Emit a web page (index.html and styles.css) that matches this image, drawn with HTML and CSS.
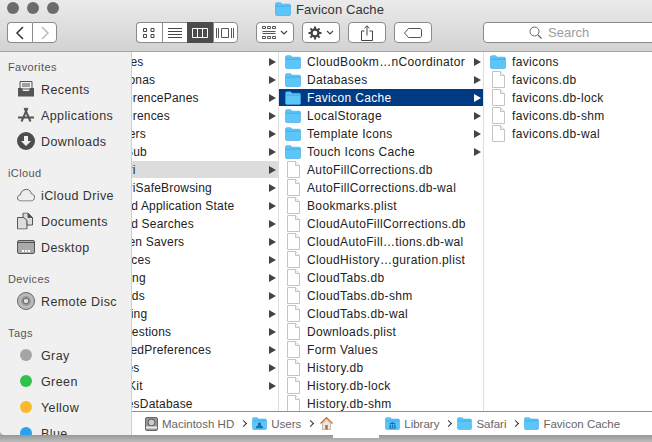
FILE: index.html
```html
<!DOCTYPE html>
<html lang="en">
<head>
    <meta charset="UTF-8">
    <meta name="viewport" content="width=device-width, initial-scale=1.0">
    <title>Favicon Cache</title>
    <link rel="stylesheet" href="styles.css">
</head>
<body>
    <svg class="defs" width="0" height="0">
        <symbol id="folder" viewBox="0 0 16 14">
            <path d="M0.5 2.2C0.5 1.2 1 0.7 2 0.7H5.6L7.2 2.2H14.2C15 2.2 15.5 2.7 15.5 3.5V12.2C15.5 13 15 13.5 14.2 13.5H1.8C1 13.5 0.5 13 0.5 12.2Z" fill="#5cc6f8" stroke="#3aa6e6" stroke-width="0.6"/>
            <path d="M0.8 4.2H15.2" stroke="#35a3e4" stroke-width="0.7"/>
        </symbol>
        <symbol id="folder-users" viewBox="0 0 16 14">
            <use href="#folder"/>
            <path d="M4 12C4 9.8 6 9.6 6.6 9C6 8 6 6 8 6C10 6 10 8 9.4 9C10 9.6 12 9.8 12 12Z" fill="#1470b0"/>
        </symbol>
        <symbol id="folder-library" viewBox="0 0 16 14">
            <use href="#folder"/>
            <path d="M4 7.5L8 5.5L12 7.5ZM4.8 8.2H6.2V11H4.8ZM7.3 8.2H8.7V11H7.3ZM9.8 8.2H11.2V11H9.8ZM4 11.3H12V12.3H4Z" fill="#1470b0"/>
        </symbol>
        <symbol id="file" viewBox="0 0 13 17">
            <path d="M0.5 0.5H8.5L12.5 4.5V16.5H0.5Z" fill="#fff" stroke="#c4c4c4"/>
            <path d="M8.5 0.5V4.5H12.5" fill="#f2f2f2" stroke="#c4c4c4"/>
        </symbol>
    </svg>

    <div class="window">
        <header class="toolbar">
            <div class="lights"><i></i><i></i><i></i></div>
            <div class="title">
                <svg class="title-icon"><use href="#folder"/></svg>
                <span>Favicon Cache</span>
            </div>
            <div class="tools">
                <div class="seg nav">
                    <button><svg width="10" height="14" viewBox="0 0 10 14"><path d="M8 1L2 7L8 13" fill="none" stroke="#333" stroke-width="1.5"/></svg></button>
                    <button><svg width="10" height="14" viewBox="0 0 10 14"><path d="M2 1L8 7L2 13" fill="none" stroke="#bbb" stroke-width="1.5"/></svg></button>
                </div>
                <div class="seg views">
                    <button><svg width="14" height="12" viewBox="0 0 14 12"><path d="M1.5 1.5h3v3h-3zM9 1.5h3v3H9zM1.5 7.5h3v3h-3zM9 7.5h3v3H9z" fill="none" stroke="#444"/></svg></button>
                    <button><svg width="16" height="12" viewBox="0 0 16 12"><path d="M1 1.5h14M1 4.5h14M1 7.5h14M1 10.5h14" stroke="#444"/></svg></button>
                    <button class="on"><svg width="16" height="10" viewBox="0 0 16 10"><path d="M0.5 0.5h15v9H0.5zM5.5 0.5v9M10.5 0.5v9" fill="none" stroke="#fff"/></svg></button>
                    <button><svg width="18" height="12" viewBox="0 0 18 12"><path d="M5.5 1.5h7v9h-7zM0.5 1v10M2.5 1v10M15.5 1v10M17.5 1v10" fill="none" stroke="#555"/></svg></button>
                </div>
                <button class="tool arrange">
                    <svg width="14" height="13" viewBox="0 0 14 13"><path d="M0.5 0.5h3v2h-3zM5.5 0.5h3v2h-3zM10.5 0.5h3v2h-3zM0.5 5.5h13M0.5 7.5h13M0.5 10.5h3v2h-3zM5.5 10.5h3v2h-3zM10.5 10.5h3v2h-3z" fill="none" stroke="#555"/></svg>
                    <svg width="8" height="5" viewBox="0 0 8 5"><path d="M1 1L4 4L7 1" fill="none" stroke="#444" stroke-width="1.2"/></svg>
                </button>
                <button class="tool arrange">
                    <svg width="14" height="14" viewBox="0 0 14 14"><circle cx="7" cy="7" r="3.5" fill="none" stroke="#444" stroke-width="2.4"/><path d="M7 0.5v3M7 10.5v3M0.5 7h3M10.5 7h3M2.4 2.4l2.1 2.1M9.5 9.5l2.1 2.1M2.4 11.6l2.1-2.1M9.5 4.5l2.1-2.1" stroke="#444" stroke-width="2"/></svg>
                    <svg width="8" height="5" viewBox="0 0 8 5"><path d="M1 1L4 4L7 1" fill="none" stroke="#444" stroke-width="1.2"/></svg>
                </button>
                <button class="tool"><svg width="12" height="16" viewBox="0 0 12 16"><path d="M3.5 6H0.5V15.5H11.5V6H8.5M6 10.5V1M3.5 3.2L6 0.8L8.5 3.2" fill="none" stroke="#444"/></svg></button>
                <button class="tool"><svg width="18" height="10" viewBox="0 0 18 10"><path d="M4.5 0.5H16C16.8 0.5 17.5 1.2 17.5 2V8C17.5 8.8 16.8 9.5 16 9.5H4.5L0.5 5Z" fill="none" stroke="#555"/></svg></button>
                <div class="search">
                    <svg width="13" height="13" viewBox="0 0 13 13"><circle cx="5.5" cy="5.5" r="4.5" fill="none" stroke="#666"/><path d="M9 9L12.5 12.5" stroke="#666" stroke-width="1.2"/></svg>
                    <span>Search</span>
                </div>
            </div>
        </header>

        <div class="main">
            <aside class="sidebar">
                <h4>Favorites</h4>
                <div class="side-item">
                    <svg width="18" height="16" viewBox="0 0 18 16"><path d="M3 0.5H15V8H3Z" fill="#eee" stroke="#555"/><path d="M5 3h8M5 5h8" stroke="#555"/><path d="M1 7H5L6 10H12L13 7H17V15.5H1Z" fill="#555"/></svg>
                    Recents
                </div>
                <div class="side-item">
                    <svg width="18" height="16" viewBox="0 0 18 16"><path d="M7.5 1L13.5 14.5M10.5 1L4.5 14.5M1 10.5H17" fill="none" stroke="#555" stroke-width="2"/></svg>
                    Applications
                </div>
                <div class="side-item">
                    <svg width="18" height="18" viewBox="0 0 18 18"><circle cx="9" cy="9" r="9" fill="#4d4d4d"/><path d="M7 4H11V9H14L9 14L4 9H7Z" fill="#f0f0f0"/></svg>
                    Downloads
                </div>
                <h4>iCloud</h4>
                <div class="side-item">
                    <svg width="18" height="13" viewBox="0 0 18 13"><path d="M4 12.5C1.8 12.5 0.5 11 0.5 9.3C0.5 7.6 1.8 6.4 3.3 6.4C3.6 3.8 5.9 0.8 9.4 0.8C12.2 0.8 14 3 14.3 5.2C16.2 5.4 17.5 7 17.5 8.9C17.5 11 16 12.5 14 12.5Z" fill="#eee" stroke="#666"/></svg>
                    iCloud Drive
                </div>
                <div class="side-item">
                    <svg width="16" height="17" viewBox="0 0 16 17"><path d="M0.5 5H7L10 8V16.5H0.5Z" fill="#ddd" stroke="#555"/><path d="M6 0.5H11L15.5 5V12.5H10V8L7 5H6Z" fill="#ddd" stroke="#555"/><path d="M11 0.5V5H15.5" fill="#555" stroke="#555"/></svg>
                    Documents
                </div>
                <div class="side-item">
                    <svg width="18" height="14" viewBox="0 0 18 14"><rect x="0.5" y="0.5" width="17" height="13" rx="1.5" fill="#aaa" stroke="#555"/><path d="M1 2.5H17" stroke="#555"/><path d="M5 11H13" stroke="#fff" stroke-width="2" stroke-dasharray="2 1"/></svg>
                    Desktop
                </div>
                <h4>Devices</h4>
                <div class="side-item">
                    <svg width="18" height="18" viewBox="0 0 18 18"><circle cx="9" cy="9" r="8.5" fill="#bbb" stroke="#666"/><circle cx="9" cy="9" r="5" fill="#999"/><circle cx="9" cy="9" r="2.8" fill="#ddd" stroke="#666"/></svg>
                    Remote Disc
                </div>
                <h4>Tags</h4>
                <div class="side-item"><i class="dot gray"></i>Gray</div>
                <div class="side-item"><i class="dot green"></i>Green</div>
                <div class="side-item"><i class="dot yellow"></i>Yellow</div>
                <div class="side-item"><i class="dot blue"></i>Blue</div>
            </aside>

            <div class="browser">
                <div class="columns">
                    <div class="col col-lib">
                        <div class="row more"><span>Passes</span></div>
                        <div class="row more"><span>Personas</span></div>
                        <div class="row more"><span>PreferencePanes</span></div>
                        <div class="row more"><span>Preferences</span></div>
                        <div class="row more"><span>Printers</span></div>
                        <div class="row more"><span>PubSub</span></div>
                        <div class="row more open"><span>Safari</span></div>
                        <div class="row more"><span>SafariSafeBrowsing</span></div>
                        <div class="row more"><span>Saved Application State</span></div>
                        <div class="row more"><span>Saved Searches</span></div>
                        <div class="row more"><span>Screen Savers</span></div>
                        <div class="row more"><span>Services</span></div>
                        <div class="row more"><span>Sharing</span></div>
                        <div class="row more"><span>Sounds</span></div>
                        <div class="row more"><span>Spelling</span></div>
                        <div class="row more"><span>Suggestions</span></div>
                        <div class="row more"><span>SyncedPreferences</span></div>
                        <div class="row more"><span>Voices</span></div>
                        <div class="row more"><span>WebKit</span></div>
                        <div class="row"><span>iTunesDatabase</span></div>
                    </div>
                    <div class="col col-safari">
                        <div class="row more"><svg class="ico"><use href="#folder"/></svg><span>CloudBookm…nCoordinator</span></div>
                        <div class="row more"><svg class="ico"><use href="#folder"/></svg><span>Databases</span></div>
                        <div class="row more active"><svg class="ico"><use href="#folder"/></svg><span>Favicon Cache</span></div>
                        <div class="row more"><svg class="ico"><use href="#folder"/></svg><span>LocalStorage</span></div>
                        <div class="row more"><svg class="ico"><use href="#folder"/></svg><span>Template Icons</span></div>
                        <div class="row more"><svg class="ico"><use href="#folder"/></svg><span>Touch Icons Cache</span></div>
                        <div class="row"><svg class="ico doc"><use href="#file"/></svg><span>AutoFillCorrections.db</span></div>
                        <div class="row"><svg class="ico doc"><use href="#file"/></svg><span>AutoFillCorrections.db-wal</span></div>
                        <div class="row"><svg class="ico doc"><use href="#file"/></svg><span>Bookmarks.plist</span></div>
                        <div class="row"><svg class="ico doc"><use href="#file"/></svg><span>CloudAutoFillCorrections.db</span></div>
                        <div class="row"><svg class="ico doc"><use href="#file"/></svg><span>CloudAutoFill…tions.db-wal</span></div>
                        <div class="row"><svg class="ico doc"><use href="#file"/></svg><span>CloudHistory…guration.plist</span></div>
                        <div class="row"><svg class="ico doc"><use href="#file"/></svg><span>CloudTabs.db</span></div>
                        <div class="row"><svg class="ico doc"><use href="#file"/></svg><span>CloudTabs.db-shm</span></div>
                        <div class="row"><svg class="ico doc"><use href="#file"/></svg><span>CloudTabs.db-wal</span></div>
                        <div class="row"><svg class="ico doc"><use href="#file"/></svg><span>Downloads.plist</span></div>
                        <div class="row"><svg class="ico doc"><use href="#file"/></svg><span>Form Values</span></div>
                        <div class="row"><svg class="ico doc"><use href="#file"/></svg><span>History.db</span></div>
                        <div class="row"><svg class="ico doc"><use href="#file"/></svg><span>History.db-lock</span></div>
                        <div class="row"><svg class="ico doc"><use href="#file"/></svg><span>History.db-shm</span></div>
                    </div>
                    <div class="col col-cache">
                        <div class="row"><svg class="ico"><use href="#folder"/></svg><span>favicons</span></div>
                        <div class="row"><svg class="ico doc"><use href="#file"/></svg><span>favicons.db</span></div>
                        <div class="row"><svg class="ico doc"><use href="#file"/></svg><span>favicons.db-lock</span></div>
                        <div class="row"><svg class="ico doc"><use href="#file"/></svg><span>favicons.db-shm</span></div>
                        <div class="row"><svg class="ico doc"><use href="#file"/></svg><span>favicons.db-wal</span></div>
                    </div>
                </div>
                <div class="pathbar">
                    <div class="crumb disk">
                        <svg width="13" height="14" viewBox="0 0 13 14"><rect x="0.5" y="0.5" width="12" height="13" rx="1.5" fill="#999" stroke="#666"/><circle cx="6.5" cy="5.5" r="3.5" fill="#ccc" stroke="#555"/><path d="M1 10.5H12" stroke="#eee" stroke-width="2"/></svg>
                        <span>Macintosh HD</span>
                    </div>
                    <div class="crumb">
                        <svg class="pico"><use href="#folder-users"/></svg>
                        <span>Users</span>
                    </div>
                    <div class="crumb home">
                        <svg width="13" height="13" viewBox="0 0 13 13"><path d="M0.5 6.5L6.5 0.8L12.5 6.5" fill="none" stroke="#d9661f" stroke-width="1.4"/><path d="M2.5 6.5V12.5H10.5V6.5L6.5 3Z" fill="#e8e8e8" stroke="#999" stroke-width="0.6"/><path d="M5.2 8H7.8V12.5H5.2Z" fill="#d9661f"/></svg>
                    </div>
                    <div class="crumb">
                        <svg class="pico"><use href="#folder-library"/></svg>
                        <span>Library</span>
                    </div>
                    <div class="crumb">
                        <svg class="pico"><use href="#folder"/></svg>
                        <span>Safari</span>
                    </div>
                    <div class="crumb last">
                        <svg class="pico"><use href="#folder"/></svg>
                        <span>Favicon Cache</span>
                    </div>
                </div>
            </div>
        </div>
    </div>
    <div class="backdrop"><div class="notch"></div></div>
</body>
</html>
```

FILE: styles.css
```css
html, body {
    margin: 0;
    height: 442px;
    overflow: hidden;
    background: #b4b4b4;
    font-family: "Liberation Sans", Arial, sans-serif;
    font-size: 12px;
    color: #222;
}
.defs {
    display: block;
    height: 0;
}
.window {
    height: 435px;
    display: flex;
    flex-direction: column;
    overflow: hidden;
    border-radius: 0 0 0 5px;
    background: #fff;
}

/* toolbar */
.toolbar {
    height: 51px;
    flex: none;
    border-bottom: 1px solid #a6a6a6;
    background: linear-gradient(#ebebeb, #d2d2d2);
    position: relative;
}
.lights {
    position: absolute;
    left: 7px;
    top: 2px;
    display: flex;
    gap: 8px;
}
.lights i {
    width: 12px;
    height: 12px;
    border-radius: 50%;
    background: #6c6c6c;
}
.title {
    height: 18px;
    padding-left: 275px;
    display: flex;
    align-items: center;
    gap: 5px;
    font-size: 13px;
    color: #333;
    letter-spacing: 0.1px;
}
.title-icon {
    width: 16px;
    height: 14px;
}
.tools {
    display: flex;
    padding: 4px 0 0 7px;
    height: 21px;
}
.tools button {
    height: 21px;
    padding: 0;
    border: 1px solid #8a8a8a;
    background: #fff;
    display: flex;
    align-items: center;
    justify-content: center;
    gap: 4px;
}
.seg {
    display: flex;
}
.seg button {
    border-right: none;
}
.seg button:first-child {
    border-radius: 4px 0 0 4px;
}
.seg button:last-child {
    border-right: 1px solid #8a8a8a;
    border-radius: 0 4px 4px 0;
}
.nav button {
    width: 25px;
}
.views {
    margin-left: 79px;
}
.views button {
    width: 25.5px;
}
.views .on {
    background: #4c4c4c;
    border-color: #4c4c4c;
}
.tool {
    width: 38px;
    margin-left: 8px;
    border-radius: 4px;
}
.arrange:first-of-type {
    margin-left: 18px;
}
.search {
    margin-left: 51px;
    flex: 1;
    height: 19px;
    margin-right: -4px;
    border: 1px solid #8a8a8a;
    border-radius: 4px;
    background: #fff;
    display: flex;
    align-items: center;
    padding-left: 45px;
    gap: 6px;
    font-size: 13px;
    color: #9c9c9c;
}

/* sidebar */
.main {
    flex: 1;
    display: flex;
    min-height: 0;
}
.sidebar {
    width: 131px;
    flex: none;
    overflow: hidden;
    background: #f0f0f0;
    border-right: 1px solid #cfcfcf;
}
.sidebar h4 {
    margin: 0;
    height: 17px;
    line-height: 16px;
    padding: 7px 0 0 8px;
    font-size: 11px;
    font-weight: normal;
    color: #555;
    letter-spacing: 0.4px;
}
.sidebar .side-item + h4 {
    padding-top: 11px;
}
.side-item {
    box-sizing: border-box;
    height: 26px;
    display: flex;
    align-items: center;
    position: relative;
    padding: 2px 0 0 41px;
    font-size: 12.5px;
    color: #333;
    letter-spacing: 0.4px;
}
.side-item svg {
    position: absolute;
    left: 17px;
    top: 50%;
    transform: translateY(-50%);
}
.dot {
    position: absolute;
    left: 20px;
    top: 7px;
    width: 12px;
    height: 12px;
    border-radius: 50%;
}
.gray { background: #a5a5a7; }
.green { background: #2fc24c; }
.yellow { background: #fdb92c; }
.blue { background: #2da1ee; }

/* columns */
.browser {
    flex: 1;
    min-width: 0;
    display: flex;
    flex-direction: column;
}
.columns {
    flex: 1;
    min-height: 0;
    display: flex;
    background: #fff;
}
.col {
    overflow: hidden;
    flex: none;
    padding-top: 1px;
    border-right: 1px solid #dedede;
}
.col-lib { width: 146px; }
.col-safari { width: 204px; }
.col-cache { flex: 1; border-right: none; }
.row {
    height: 17px;
    margin-bottom: 1px;
    display: flex;
    align-items: center;
    position: relative;
    white-space: nowrap;
    letter-spacing: 0.35px;
}
.row span {
    padding-left: 28px;
}
.col-lib .row {
    letter-spacing: 0.2px;
}
.col-lib .row span {
    padding-left: 0;
    margin-left: -29px;
}
.ico {
    position: absolute;
    left: 6px;
    top: 2px;
    width: 16px;
    height: 14px;
}
.ico.doc {
    left: 8px;
    top: 0;
    width: 13px;
    height: 17px;
}
.more::after {
    content: "";
    position: absolute;
    right: 2px;
    top: 5px;
    border-left: 7px solid #444;
    border-top: 4px solid transparent;
    border-bottom: 4px solid transparent;
}
.open {
    background: #dcdcdc;
}
.active {
    background: #003a82;
    color: #fff;
}
.active::after {
    border-left-color: #fff;
}

/* path bar */
.pathbar {
    height: 23px;
    flex: none;
    border-top: 1px solid #8f8f8f;
    background: #fff;
    display: flex;
    align-items: center;
    padding-left: 13px;
    font-size: 11.5px;
    color: #666;
}
.crumb {
    display: flex;
    align-items: center;
    gap: 4px;
}
.crumb:not(.last)::after {
    content: "";
    box-sizing: border-box;
    width: 5px;
    height: 5px;
    margin: 0 6px 0 3px;
    border-top: 1.5px solid #333;
    border-right: 1.5px solid #333;
    transform: rotate(45deg);
}
.home::after {
    display: none;
}
.home {
    width: 65px;
    margin-left: 1px;
}
.pico {
    width: 15px;
    height: 13px;
}

.backdrop {
    height: 7px;
    background: linear-gradient(#979797, #bebebe);
}
.notch {
    width: 46px;
    height: 3px;
    margin-left: 333px;
    background: #fff;
}
```
